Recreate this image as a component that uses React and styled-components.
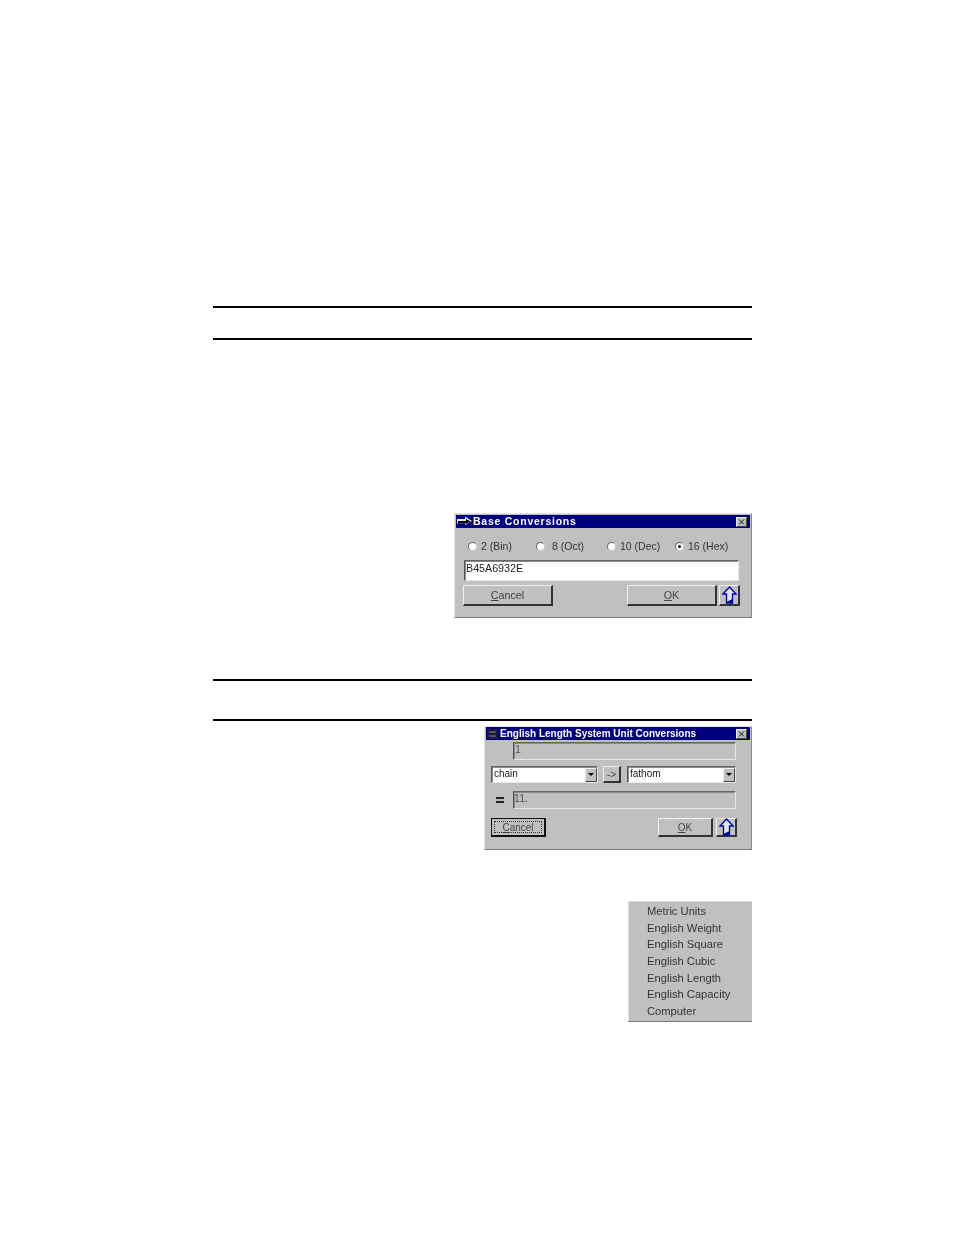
import styled, { createGlobalStyle } from 'styled-components';

const GlobalStyle = createGlobalStyle`
  html, body {
    margin: 0;
    background: #fff;
    font-family: "Liberation Sans", Arial, sans-serif;
  }
`;

const Page = styled.div`
  display: flex;
  flex-direction: column;
  width: 539px;
  height: 1235px;
  box-sizing: border-box;
  margin-left: 213px;
  padding-top: 306px;
`;

const Rule = styled.div`
  height: 2px;
  background: #000;
  flex: none;
  margin-top: ${props => props.$top || 0}px;
`;

const Dialog = styled.div`
  align-self: flex-end;
  flex: none;
  box-sizing: border-box;
  width: ${props => props.$width}px;
  height: ${props => props.$height}px;
  margin-top: ${props => props.$top}px;
  background: #c0c0c0;
  border-top: 1px solid #e4e4e4;
  border-left: 1px solid #e4e4e4;
  border-right: 1px solid #888;
  border-bottom: 1px solid #777;
  padding: ${props => props.$pad}px 1px 0 1px;
  color: #222;
  font-size: 10.7px;
  filter: blur(0.35px);
`;

const TitleBar = styled.div`
  display: flex;
  align-items: center;
  height: 13px;
  background: #000080;
  color: #fff;
  font-size: ${props => props.$size}px;
  font-weight: bold;
  letter-spacing: ${props => props.$spacing}px;
  padding: 0 3px 0 1px;
  white-space: nowrap;
`;

const TitleText = styled.span`
  margin-left: ${props => props.$gap}px;
  margin-top: -1px;
  flex: 1;
`;

const CloseButton = styled.div`
  width: 11px;
  height: 10px;
  box-sizing: border-box;
  background: #c0c0c0;
  border: 1px solid;
  border-color: #eee #444 #444 #eee;
  display: flex;
  align-items: center;
  justify-content: center;
`;

const RadioRow = styled.div`
  display: grid;
  grid-template-columns: 68px 71px 68px auto;
  margin: 11px 0 0 12px;
  height: 14px;
  align-items: center;
`;

const RadioItem = styled.label`
  display: flex;
  align-items: center;
  gap: ${props => props.$gap || 4}px;
  font-size: 10.5px;
  color: #333;
`;

const RadioDot = styled.span`
  width: 7px;
  height: 7px;
  border-radius: 50%;
  background: #fff;
  border: 1px solid;
  border-color: #666 #ccc #ccc #666;
  display: flex;
  align-items: center;
  justify-content: center;
  &::after {
    content: '';
    width: 3px;
    height: 3px;
    border-radius: 50%;
    background: ${props => (props.$checked ? '#000' : 'transparent')};
  }
`;

const Sunken = styled.div`
  box-sizing: border-box;
  display: flex;
  align-items: center;
  background: ${props => (props.$disabled ? '#c0c0c0' : '#fff')};
  border: 1px solid;
  border-color: #666 #e8e8e8 #e8e8e8 #555;
  box-shadow: inset 1px 1px 0 #8a8a8a;
  height: ${props => props.$height}px;
  width: ${props => props.$width}px;
  margin-left: ${props => props.$left || 0}px;
  margin-top: ${props => props.$top || 0}px;
  padding: 0 0 ${props => props.$lift || 0}px ${props => props.$inset ?? 1}px;
  font-size: ${props => props.$size || 10.7}px;
  color: ${props => (props.$disabled ? '#555' : '#222')};
  flex: none;
`;

const ButtonRow = styled.div`
  display: flex;
  align-items: center;
  margin: ${props => props.$top}px 0 0 ${props => props.$left}px;
`;

const Button = styled.div`
  box-sizing: border-box;
  display: flex;
  align-items: center;
  justify-content: center;
  width: ${props => props.$width}px;
  height: ${props => props.$height}px;
  margin-left: ${props => props.$left || 0}px;
  background: #c0c0c0;
  border: 1px solid;
  border-color: #f0f0f0 #333 #333 #f0f0f0;
  border-right-width: 2px;
  border-bottom-width: 2px;
  font-size: ${props => props.$size || 10.7}px;
  color: #444;
  flex: none;
  u { text-decoration: underline; }
`;

const FocusButton = styled(Button)`
  border: 1px solid #111;
  border-right-width: 2px;
  border-bottom-width: 2px;
  position: relative;
  &::after {
    content: '';
    position: absolute;
    inset: 2px;
    border: 1px dotted #333;
  }
`;

const ComboRow = styled.div`
  display: flex;
  align-items: center;
  margin: ${props => props.$top}px 0 0 5px;
`;

const Combo = styled(Sunken)`
  justify-content: space-between;
`;

const ComboLabel = styled.span`
  margin: -2px 0 0 1px;
`;

const ComboArrow = styled.div`
  box-sizing: border-box;
  width: 12px;
  height: 14px;
  background: #c0c0c0;
  border: 1px solid;
  border-color: #eee #444 #444 #eee;
  display: flex;
  align-items: center;
  justify-content: center;
  &::after {
    content: '';
    border-left: 3px solid transparent;
    border-right: 3px solid transparent;
    border-top: 3px solid #000;
  }
`;

const FieldRow = styled.div`
  display: flex;
  align-items: center;
`;

const Equals = styled.span`
  width: 8px;
  height: 2px;
  margin: 8px 9px 0 10px;
  border-top: 2px solid #222;
  border-bottom: 2px solid #222;
  flex: none;
`;

const Menu = styled.div`
  align-self: flex-end;
  flex: none;
  box-sizing: border-box;
  width: 124px;
  height: 121px;
  margin-top: 51px;
  padding: 1px 0 0 18px;
  background: #c0c0c0;
  border-top: 1px solid #ddd;
  border-left: 1px solid #ddd;
  border-bottom: 1px solid #777;
  filter: blur(0.35px);
`;

const MenuItem = styled.div`
  height: 16.7px;
  line-height: 16.7px;
  font-size: 11.2px;
  color: #333;
  white-space: nowrap;
`;

const Close = () => (
  <svg width="7" height="6" viewBox="0 0 7 6">
    <path d="M1 0.5 L6 5.5 M6 0.5 L1 5.5" stroke="#111" strokeWidth="1" />
  </svg>
);

const UpArrow = () => (
  <svg width="15" height="18" viewBox="0 0 15 18">
    <path d="M7.5 1 L14 8 H10.5 V17 H4.5 V8 H1 Z" fill="#dfe4f4" stroke="#0000a0" strokeWidth="1.3" />
    <path d="M4.5 16 L10.5 13 V17 H4.5 Z" fill="#0000a0" />
  </svg>
);

const BaseIcon = () => (
  <svg width="15" height="11" viewBox="0 0 15 11">
    <path d="M0 3 H8 V0.5 L15 5 L8 9 V7.5 H0 Z" fill="#e8e8e8" />
    <path d="M1 5 H9 V3 L13.5 5.5 L9 8 V7.5 H1 Z" fill="#000" />
  </svg>
);

const LengthIcon = () => (
  <svg width="11" height="10" viewBox="0 0 11 10">
    <rect width="11" height="10" fill="#1a1a3a" />
    <path d="M2 3 H9 M2 7 H9" stroke="#666" strokeWidth="1.5" />
  </svg>
);

const menuItems = [
  'Metric Units',
  'English Weight',
  'English Square',
  'English Cubic',
  'English Length',
  'English Capacity',
  'Computer',
];

export default function App() {
  return (
    <Page>
      <GlobalStyle />
      <Rule />
      <Rule $top={30} />

      <Dialog $width={298} $height={105} $top={173} $pad={1}>
        <TitleBar $spacing={0.75} $size={10.5}>
          <BaseIcon />
          <TitleText $gap={1}>Base Conversions</TitleText>
          <CloseButton><Close /></CloseButton>
        </TitleBar>
        <RadioRow>
          <RadioItem $gap={4}><RadioDot />2 (Bin)</RadioItem>
          <RadioItem $gap={7}><RadioDot />8 (Oct)</RadioItem>
          <RadioItem $gap={4}><RadioDot />10 (Dec)</RadioItem>
          <RadioItem $gap={4}><RadioDot $checked />16 (Hex)</RadioItem>
        </RadioRow>
        <Sunken $width={275} $height={21} $left={8} $top={7} $lift={5}>B45A6932E</Sunken>
        <ButtonRow $top={4} $left={7}>
          <Button $width={90} $height={21}><span><u>C</u>ancel</span></Button>
          <Button $width={90} $height={21} $left={74}><span><u>O</u>K</span></Button>
          <Button $width={21} $height={21} $left={2}><UpArrow /></Button>
        </ButtonRow>
      </Dialog>

      <Rule $top={61} />
      <Rule $top={38} />

      <Dialog $width={268} $height={124} $top={5} $pad={0}>
        <TitleBar $spacing={0} $size={10}>
          <LengthIcon />
          <TitleText $gap={2}>English Length System Unit Conversions</TitleText>
          <CloseButton><Close /></CloseButton>
        </TitleBar>
        <Sunken $disabled $width={223} $height={18} $left={27} $top={2} $lift={4} $inset={1}>1</Sunken>
        <ComboRow $top={6}>
          <Combo $width={107} $height={17} $size={10}><ComboLabel>chain</ComboLabel><ComboArrow /></Combo>
          <Button $width={18} $height={17} $left={5} $size={10}>-&gt;</Button>
          <Combo $width={109} $height={17} $left={6} $size={10}><ComboLabel>fathom</ComboLabel><ComboArrow /></Combo>
        </ComboRow>
        <FieldRow>
          <Equals />
          <Sunken $disabled $width={223} $height={18} $top={8} $lift={4} $inset={0}>11.</Sunken>
        </FieldRow>
        <ButtonRow $top={9} $left={5}>
          <FocusButton $width={55} $height={19} $size={10}><span><u>C</u>ancel</span></FocusButton>
          <Button $width={55} $height={19} $left={112} $size={10}><span><u>O</u>K</span></Button>
          <Button $width={21} $height={19} $left={3}><UpArrow /></Button>
        </ButtonRow>
      </Dialog>

      <Menu>
        {menuItems.map(item => (
          <MenuItem key={item}>{item}</MenuItem>
        ))}
      </Menu>
    </Page>
  );
}
